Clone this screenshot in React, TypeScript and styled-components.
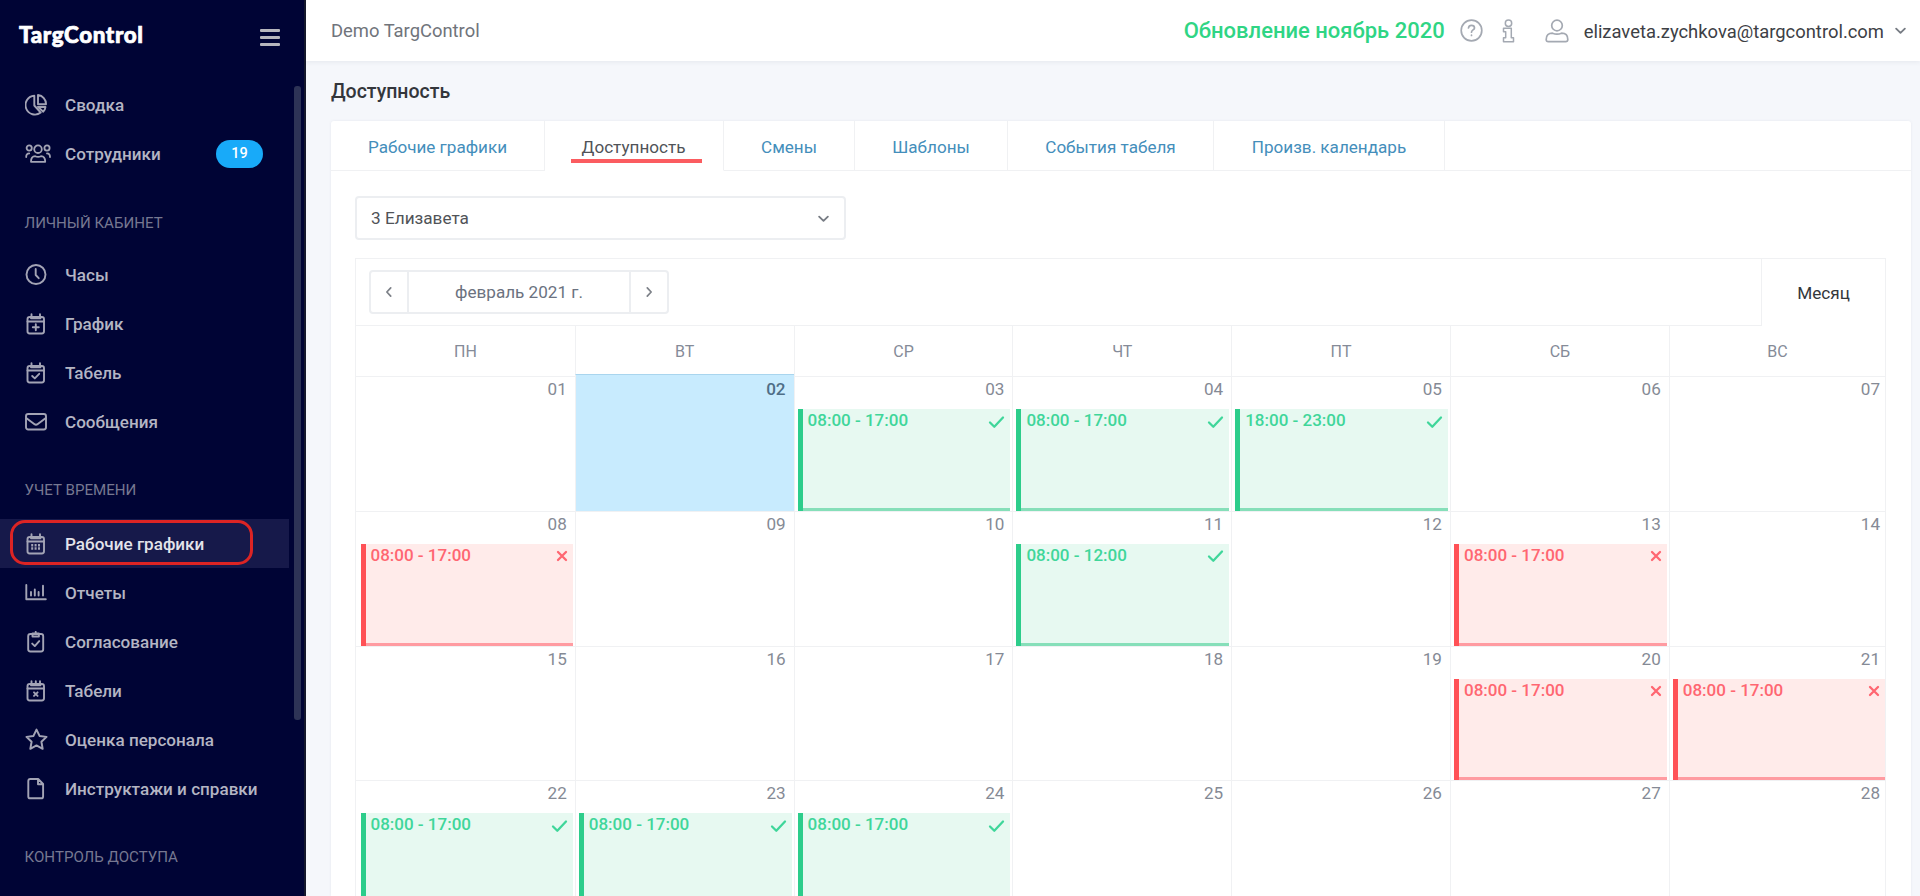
import React from 'react';
import styled, { createGlobalStyle, css } from 'styled-components';

const GlobalStyle = createGlobalStyle`
  * { box-sizing: border-box; }
  body {
    margin: 0;
    overflow: hidden;
    font-family: Roboto, "Liberation Sans", sans-serif;
    background: #f5f7fb;
  }
`;

const line = '#f0f1f3';

const Page = styled.div`
  display: flex;
  height: 896px;
  overflow: hidden;
`;

/* ---------- sidebar ---------- */

const Sidebar = styled.aside`
  display: flex;
  width: 306px;
  flex: none;
  background: #000435;
  border-right: 2px solid #15182c;
  overflow: hidden;
`;

const SidebarBody = styled.div`
  width: 289px;
  flex: none;
`;

const Brand = styled.div`
  display: flex;
  align-items: center;
  justify-content: space-between;
  height: 80px;
  padding: 0 9px 12px 19px;
`;

const Logo = styled.div`
  font: 900 22.4px Lato, sans-serif;
  letter-spacing: 0.6px;
  -webkit-text-stroke: 0.7px #fff;
  color: #fff;
`;

const Burger = styled.div`
  display: flex;
  flex-direction: column;
  gap: 4px;
  width: 20px;
  margin-top: 6px;
`;

const BurgerLine = styled.span`
  height: 3px;
  border-radius: 1px;
  background: #b6b6bd;
`;

const Heading = styled.div<{ $first?: boolean }>`
  height: 72.5px;
  padding: ${p => (p.$first ? 36 : 34.5)}px 0 0 24.5px;
  font-size: 15.1px;
  line-height: 18px;
  color: #767891;
`;

const MenuItem = styled.div<{ $active?: boolean }>`
  position: relative;
  display: flex;
  align-items: center;
  height: 49px;
  padding-left: 25px;
  font-size: 17.1px;
  font-weight: 500;
  color: ${p => (p.$active ? '#e3e3ea' : '#b4b5c3')};
  background: ${p => (p.$active ? '#16194a' : 'transparent')};
`;

const MenuIcon = styled.span`
  display: flex;
  width: 40px;
  height: 23px;
  align-items: center;
  color: #a3a4b5;
`;

const CountBadge = styled.span`
  margin-left: auto;
  margin-right: 26px;
  width: 47px;
  height: 28px;
  border-radius: 14px;
  background: #18aaf9;
  color: #fff;
  font-size: 14.5px;
  line-height: 27px;
  text-align: center;
`;

const Marker = styled.span`
  position: absolute;
  left: 10px;
  top: 1px;
  width: 243px;
  height: 45px;
  border: 3px solid #dc2424;
  border-radius: 15px;
`;

const ScrollThumb = styled.div`
  width: 7px;
  height: 634px;
  margin: 86px 0 0 5px;
  border-radius: 3px;
  background: #2d3356;
`;

/* ---------- header ---------- */

const Main = styled.main`
  display: flex;
  flex-direction: column;
  flex: 1;
  min-width: 0;
`;

const Header = styled.header`
  display: flex;
  align-items: center;
  height: 61px;
  flex: none;
  padding: 0 13px 0 25px;
  background: #fff;
  box-shadow: 0 1px 5px rgba(40, 50, 80, 0.08);
`;

const Company = styled.div`
  font-size: 18.4px;
  color: #70747b;
`;

const UpdateLink = styled.div`
  margin-left: auto;
  margin-right: 15px;
  font-size: 22px;
  font-weight: 500;
  color: #2fd584;
`;

const HeaderIcon = styled.span<{ $gap: number }>`
  display: flex;
  margin-right: ${p => p.$gap}px;
  color: #a4a9b2;
`;

const Email = styled.div`
  position: relative;
  top: 1px;
  margin-right: 10px;
  font-size: 18.4px;
  color: #3d4045;
`;

/* ---------- content ---------- */

const Title = styled.h1`
  flex: none;
  margin: 0;
  height: 60px;
  padding: 19px 0 0 25px;
  font-size: 19.5px;
  line-height: 24px;
  font-weight: 500;
  color: #33363b;
`;

const Card = styled.section`
  flex: 1;
  min-height: 0;
  margin: 0 9px 0 25px;
  background: #fff;
  box-shadow: 0 0 3px rgba(60, 70, 100, 0.08);
  border-radius: 3px 3px 0 0;
`;

const Tabs = styled.nav`
  display: flex;
  height: 50px;
`;

const Tab = styled.div<{ $w: number; $active?: boolean }>`
  display: flex;
  justify-content: center;
  width: ${p => p.$w}px;
  padding: 14px 0 0 ${p => (p.$active ? 5 : 0)}px;
  font-size: 17.1px;
  line-height: 24px;
  border-right: 1px solid ${line};
  border-bottom: 1px solid ${p => (p.$active ? 'transparent' : line)};
  color: ${p => (p.$active ? '#505358' : '#448ebb')};
`;

const TabLabel = styled.span<{ $active?: boolean }>`
  height: 28px;
  ${p => p.$active && css`
    padding: 0 17px 0 11px;
    border-bottom: 4px solid #fb5c60;
  `}
`;

const TabsRest = styled.div`
  flex: 1;
  border-bottom: 1px solid ${line};
`;

const CardBody = styled.div`
  padding: 25px 25px 0 24px;
`;

const Select = styled.div`
  display: flex;
  align-items: center;
  justify-content: space-between;
  width: 491px;
  height: 44px;
  padding: 0 14px 0 14px;
  border: 2px solid #eceef1;
  border-radius: 4px;
  font-size: 17.2px;
  color: #505358;
`;

const ChevronColor = styled.span`
  display: flex;
  color: #777c84;
`;

const Calendar = styled.div`
  margin-top: 18px;
  border: 1px solid ${line};
  border-bottom: 0;
`;

const Toolbar = styled.div`
  display: flex;
  height: 67px;
`;

const ToolbarLeft = styled.div`
  flex: 1;
  padding: 11px 0 0 13px;
  border-right: 1px solid ${line};
  border-bottom: 1px solid ${line};
`;

const MonthNav = styled.div`
  display: flex;
  width: 300px;
  height: 44px;
  border: 2px solid #eceef1;
  border-radius: 4px;
`;

const NavButton = styled.div`
  display: flex;
  align-items: center;
  justify-content: center;
  width: 36px;
  color: #7d8188;
`;

const MonthName = styled.div`
  display: flex;
  align-items: center;
  justify-content: center;
  flex: 1;
  font-size: 17.1px;
  color: #6b7280;
  border-left: 2px solid #eceef1;
  border-right: 2px solid #eceef1;
`;

const MonthTab = styled.div`
  display: flex;
  align-items: center;
  justify-content: center;
  width: 123px;
  font-size: 17.2px;
  color: #34373b;
`;

const Week = styled.div<{ $h: number }>`
  display: grid;
  grid-template-columns: repeat(6, 218.8px) 1fr;
  height: ${p => p.$h}px;
`;

const WeekdayCell = styled.div`
  display: flex;
  align-items: center;
  justify-content: center;
  font-size: 16px;
  color: #858b98;
  border-bottom: 1px solid ${line};
  & + & { border-left: 1px solid ${line}; }
`;

const DayNumber = styled.div<{ $today?: boolean }>`
  height: 32px;
  padding: 0 8px 0 0;
  font-size: 17.1px;
  font-weight: ${p => (p.$today ? 500 : 400)};
  line-height: 24px;
  text-align: right;
  color: ${p => (p.$today ? '#4f6e87' : '#858a95')};
`;

const Slot = styled.div<{ $ok: boolean }>`
  display: flex;
  justify-content: space-between;
  flex: 1;
  margin: 0 2px 0 3px;
  padding: 0 5px 0 5px;
  font-size: 17px;
  font-weight: 500;
  line-height: 22px;
  color: ${p => (p.$ok ? '#3fd69a' : '#ff6671')};
  background: ${p => (p.$ok ? '#e7f9f1' : '#ffebea')};
  border-left: 5px solid ${p => (p.$ok ? '#2dcd8b' : '#ff5156')};
  box-shadow: inset 0 -3px 0 ${p => (p.$ok ? '#86dfb9' : '#ff9ba1')};
`;

const DayCell = styled.div<{ $today?: boolean }>`
  display: flex;
  flex-direction: column;
  margin-top: ${p => (p.$today ? '-3px' : '0')};
  padding: ${p => (p.$today ? '2px' : '0')} 0 0;
  min-width: 0;
  background: ${p => (p.$today ? '#c8ebfe' : 'transparent')};
  border-top: ${p => (p.$today ? '1px solid #a9d5ee' : '0')};
  border-bottom: 1px solid ${line};
  & + & { border-left: 1px solid ${line}; }
  &:first-child ${Slot} { margin-left: 4.5px; }
  &:last-child ${Slot} { margin-right: 0; }
  &:last-child ${DayNumber} { padding-right: 5px; }
`;

const SlotIcon = styled.span`
  display: flex;
  align-items: center;
  height: 25px;
`;

/* ---------- icons ---------- */

type IconProps = { w?: number; h?: number; sw?: number; box?: string; children: React.ReactNode };

const Icon = ({ w = 22, h = 22, sw = 1.9, box = '0 0 22 22', children }: IconProps) => (
  <svg width={w} height={h} viewBox={box} fill="none" stroke="currentColor" strokeWidth={sw} strokeLinecap="round" strokeLinejoin="round">
    {children}
  </svg>
);

const CalendarBase = () => (
  <>
    <rect x="2.5" y="4" width="16.5" height="16.5" rx="2.2" />
    <path d="M2.5 8.5H19M6.5 1.3V4M15 1.3V4M6 5.3h9.5" />
  </>
);

const icons: Record<string, React.ReactNode> = {
  pie: (
    <Icon>
      <path d="M9.3 1.8A9.4 9.4 0 1 0 15.7 18.6L9.3 11.5Z" />
      <path d="M13 1v9.2h8A9 9 0 0 0 13 1ZM13 13h7.5a8 8 0 0 1-2.2 4.7L13 13" />
    </Icon>
  ),
  people: (
    <Icon w={27} box="0 0 27 22" sw={1.8}>
      <circle cx="13" cy="6.2" r="3.8" />
      <path d="M6 18.8c0-4 1.4-5.6 4.2-5.6 1.6.8 4.2.8 5.8 0 2.8 0 4.2 1.6 4.2 5.6ZM1.2 14c0-2.6.8-3.6 3-3.6M25 14c0-2.6-.8-3.6-3-3.6" />
      <circle cx="4.2" cy="5" r="2.6" />
      <circle cx="22" cy="5" r="2.6" />
    </Icon>
  ),
  clock: (
    <Icon>
      <circle cx="11" cy="10.5" r="9.5" />
      <path d="M10.7 5v6l3 3.2" />
    </Icon>
  ),
  calPlus: <Icon><CalendarBase /><path d="M10.8 11.2v6M7.8 14.2h6" /></Icon>,
  calCheck: <Icon><CalendarBase /><path d="M7.2 14l2.6 2.4 4.4-4.6" /></Icon>,
  mail: (
    <Icon>
      <rect x="1" y="3" width="20" height="15.5" rx="2.2" />
      <path d="M1.5 7.2 9.2 13c1.2.9 2.4.9 3.6 0L20.5 7.2" />
    </Icon>
  ),
  calList: <Icon><CalendarBase /><path d="M6.2 12.3h9M6.2 15.5h9" strokeWidth="2.4" strokeDasharray="2 1.4" strokeLinecap="butt" /></Icon>,
  chart: (
    <Icon>
      <path d="M1.3 3v14.2h19.5M6 10v3.6M9.8 7.5v6M13.6 10v3.6M18 3.8v9.8" />
    </Icon>
  ),
  clipboard: (
    <Icon>
      <rect x="3.2" y="3" width="15" height="17.5" rx="2.2" />
      <path d="M7.5 2.5h6.4v3H7.5ZM10.7.9v1M7.2 12.6l2.6 2.5 4.4-5" />
    </Icon>
  ),
  calX: <Icon><CalendarBase /><path d="m9 12.3 3.6 3.6M12.6 12.3 9 15.9M10.8 1.3v3" /></Icon>,
  star: (
    <Icon w={23} h={23}>
      <path d="m11 1.5 2.9 6.1 6.7.9-4.9 4.7 1.2 6.7L11 16.7l-5.9 3.2 1.2-6.7L1.4 8.5l6.7-.9Z" />
    </Icon>
  ),
  file: (
    <Icon>
      <path d="M5.2 1h8l4.9 5v12.4c0 1.2-.7 1.9-1.9 1.9H5.2c-1.2 0-1.9-.7-1.9-1.9V3c0-1.3.7-2 1.900-2ZM13 1.300V6.200h4.900" />
    </Icon>
  ),
};

const Chevron = ({ dir, size = 14 }: { dir: 'down' | 'left' | 'right'; size?: number }) => (
  <Icon w={size} h={size} box="0 0 14 14" sw={2}>
    <path d={dir === 'down' ? 'M2.300 5 7 9.500 11.700 5' : dir === 'left' ? 'M9 2.200 4.500 7 9 11.800' : 'M5 2.200 9.500 7 5 11.800'} />
  </Icon>
);

const SlotMark = ({ ok }: { ok: boolean }) => (
  <SlotIcon>
    {ok ? (
      <Icon w={17} h={14} box="0 0 17 14" sw={2.300}><path d="m2 7.500 4.300 4.200L15 2.500" /></Icon>
    ) : (
      <Icon w={12} h={12} box="0 0 12 12" sw={2.300}><path d="m2 2 8 8M10 2l-8 8" /></Icon>
    )}
  </SlotIcon>
);

/* ---------- data ---------- */

type Entry = { icon: string; text: string; badge?: string; active?: boolean };
const groups: { title?: string; items: Entry[] }[] = [
  { items: [{ icon: 'pie', text: 'Сводка' }, { icon: 'people', text: 'Сотрудники', badge: '19' }] },
  {
    title: 'ЛИЧНЫЙ КАБИНЕТ',
    items: [
      { icon: 'clock', text: 'Часы' },
      { icon: 'calPlus', text: 'График' },
      { icon: 'calCheck', text: 'Табель' },
      { icon: 'mail', text: 'Сообщения' },
    ],
  },
  {
    title: 'УЧЕТ ВРЕМЕНИ',
    items: [
      { icon: 'calList', text: 'Рабочие графики', active: true },
      { icon: 'chart', text: 'Отчеты' },
      { icon: 'clipboard', text: 'Согласование' },
      { icon: 'calX', text: 'Табели' },
      { icon: 'star', text: 'Оценка персонала' },
      { icon: 'file', text: 'Инструктажи и справки' },
    ],
  },
  { title: 'КОНТРОЛЬ ДОСТУПА', items: [] },
];

const tabs = [
  { text: 'Рабочие графики', w: 214 },
  { text: 'Доступность', w: 179, active: true },
  { text: 'Смены', w: 131 },
  { text: 'Шаблоны', w: 153 },
  { text: 'События табеля', w: 206 },
  { text: 'Произв. календарь', w: 231 },
];

const weekdays = ['ПН', 'ВТ', 'СР', 'ЧТ', 'ПТ', 'СБ', 'ВС'];

const slots: Record<number, { time: string; ok: boolean }> = {
  3: { time: '08:00 - 17:00', ok: true },
  4: { time: '08:00 - 17:00', ok: true },
  5: { time: '18:00 - 23:00', ok: true },
  8: { time: '08:00 - 17:00', ok: false },
  11: { time: '08:00 - 12:00', ok: true },
  13: { time: '08:00 - 17:00', ok: false },
  20: { time: '08:00 - 17:00', ok: false },
  21: { time: '08:00 - 17:00', ok: false },
  22: { time: '08:00 - 17:00', ok: true },
  23: { time: '08:00 - 17:00', ok: true },
  24: { time: '08:00 - 17:00', ok: true },
};

export default function App() {
  return (
    <Page>
      <GlobalStyle />
      <Sidebar>
        <SidebarBody>
          <Brand>
            <Logo>TargControl</Logo>
            <Burger><BurgerLine /><BurgerLine /><BurgerLine /></Burger>
          </Brand>
          {groups.map((g, i) => (
            <React.Fragment key={i}>
              {g.title && <Heading $first={i === 1}>{g.title}</Heading>}
              {g.items.map(it => (
                <MenuItem key={it.text} $active={it.active}>
                  <MenuIcon>{icons[it.icon]}</MenuIcon>
                  <span>{it.text}</span>
                  {it.badge && <CountBadge>{it.badge}</CountBadge>}
                  {it.active && <Marker />}
                </MenuItem>
              ))}
            </React.Fragment>
          ))}
        </SidebarBody>
        <ScrollThumb />
      </Sidebar>
      <Main>
        <Header>
          <Company>Demo TargControl</Company>
          <UpdateLink>Обновление ноябрь 2020</UpdateLink>
          <HeaderIcon $gap={19}>
            <Icon w={23} h={23} box="0 0 23 23" sw={1.700}>
              <circle cx="11.500" cy="11.500" r="10.300" />
              <path d="M8.500 9c.2-1.700 1.300-2.600 3-2.600s3 1 3 2.500c0 2-3 2.100-3 4.300M11.500 16.200v.3" />
            </Icon>
          </HeaderIcon>
          <HeaderIcon $gap={30}>
            <Icon w={13} h={24} box="0 0 13 24" sw={1.500}>
              <circle cx="6.500" cy="4.300" r="3.200" />
              <path d="M1.500 9.300h7.800v9.500h2.200v3.900h-10v-3.900h2.200v-6H1.500Z" />
            </Icon>
          </HeaderIcon>
          <HeaderIcon $gap={15}>
            <Icon w={24} h={24} box="0 0 24 24" sw={1.700}>
              <circle cx="12" cy="6.500" r="5.300" />
              <path d="M1.200 20.500c0-4.600 2.300-6.300 6.300-6.300 2.800 1.200 6.200 1.200 9 0 4 0 6.300 1.700 6.300 6.300 0 1.400-.7 2.100-2.100 2.100H3.300c-1.400 0-2.100-.7-2.100-2.100Z" />
            </Icon>
          </HeaderIcon>
          <Email>elizaveta.zychkova@targcontrol.com</Email>
          <ChevronColor><Chevron dir="down" size={13} /></ChevronColor>
        </Header>
        <Title>Доступность</Title>
        <Card>
          <Tabs>
            {tabs.map(t => (
              <Tab key={t.text} $w={t.w} $active={t.active}>
                <TabLabel $active={t.active}>{t.text}</TabLabel>
              </Tab>
            ))}
            <TabsRest />
          </Tabs>
          <CardBody>
            <Select>
              3 Елизавета
              <ChevronColor><Chevron dir="down" size={13} /></ChevronColor>
            </Select>
            <Calendar>
              <Toolbar>
                <ToolbarLeft>
                  <MonthNav>
                    <NavButton><Chevron dir="left" size={12} /></NavButton>
                    <MonthName>февраль 2021 г.</MonthName>
                    <NavButton><Chevron dir="right" size={12} /></NavButton>
                  </MonthNav>
                </ToolbarLeft>
                <MonthTab>Месяц</MonthTab>
              </Toolbar>
              <Week $h={51}>
                {weekdays.map(d => <WeekdayCell key={d}>{d}</WeekdayCell>)}
              </Week>
              {[0, 1, 2, 3].map(w => (
                <Week key={w} $h={134.8}>
                  {weekdays.map((_, i) => {
                    const day = w * 7 + i + 1;
                    const slot = slots[day];
                    return (
                      <DayCell key={day} $today={day === 2}>
                        <DayNumber $today={day === 2}>{String(day).padStart(2, '0')}</DayNumber>
                        {slot && (
                          <Slot $ok={slot.ok}>
                            {slot.time}
                            <SlotMark ok={slot.ok} />
                          </Slot>
                        )}
                      </DayCell>
                    );
                  })}
                </Week>
              ))}
            </Calendar>
          </CardBody>
        </Card>
      </Main>
    </Page>
  );
}
